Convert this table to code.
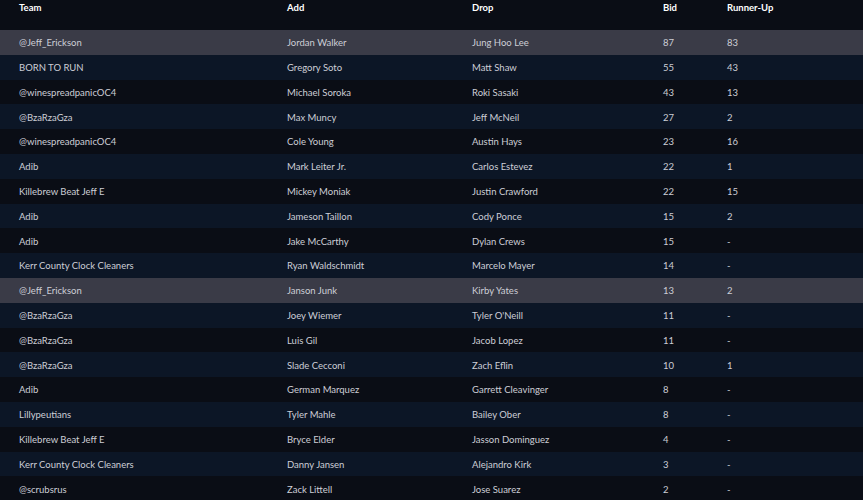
import * as React from 'react';

type Claim = {
  team: string;
  add: string;
  drop: string;
  bid: number;
  runnerUp: string;
};

const claims: Claim[] = [
  { team: '@Jeff_Erickson', add: 'Jordan Walker', drop: 'Jung Hoo Lee', bid: 87, runnerUp: '83' },
  { team: 'BORN TO RUN', add: 'Gregory Soto', drop: 'Matt Shaw', bid: 55, runnerUp: '43' },
  { team: '@winespreadpanicOC4', add: 'Michael Soroka', drop: 'Roki Sasaki', bid: 43, runnerUp: '13' },
  { team: '@BzaRzaGza', add: 'Max Muncy', drop: 'Jeff McNeil', bid: 27, runnerUp: '2' },
  { team: '@winespreadpanicOC4', add: 'Cole Young', drop: 'Austin Hays', bid: 23, runnerUp: '16' },
  { team: 'Adib', add: 'Mark Leiter Jr.', drop: 'Carlos Estevez', bid: 22, runnerUp: '1' },
  { team: 'Killebrew Beat Jeff E', add: 'Mickey Moniak', drop: 'Justin Crawford', bid: 22, runnerUp: '15' },
  { team: 'Adib', add: 'Jameson Taillon', drop: 'Cody Ponce', bid: 15, runnerUp: '2' },
  { team: 'Adib', add: 'Jake McCarthy', drop: 'Dylan Crews', bid: 15, runnerUp: '-' },
  { team: 'Kerr County Clock Cleaners', add: 'Ryan Waldschmidt', drop: 'Marcelo Mayer', bid: 14, runnerUp: '-' },
  { team: '@Jeff_Erickson', add: 'Janson Junk', drop: 'Kirby Yates', bid: 13, runnerUp: '2' },
  { team: '@BzaRzaGza', add: 'Joey Wiemer', drop: "Tyler O'Neill", bid: 11, runnerUp: '-' },
  { team: '@BzaRzaGza', add: 'Luis Gil', drop: 'Jacob Lopez', bid: 11, runnerUp: '-' },
  { team: '@BzaRzaGza', add: 'Slade Cecconi', drop: 'Zach Eflin', bid: 10, runnerUp: '1' },
  { team: 'Adib', add: 'German Marquez', drop: 'Garrett Cleavinger', bid: 8, runnerUp: '-' },
  { team: 'Lillypeutians', add: 'Tyler Mahle', drop: 'Bailey Ober', bid: 8, runnerUp: '-' },
  { team: 'Killebrew Beat Jeff E', add: 'Bryce Elder', drop: 'Jasson Dominguez', bid: 4, runnerUp: '-' },
  { team: 'Kerr County Clock Cleaners', add: 'Danny Jansen', drop: 'Alejandro Kirk', bid: 3, runnerUp: '-' },
  { team: '@scrubsrus', add: 'Zack Littell', drop: 'Jose Suarez', bid: 2, runnerUp: '-' },
];

const cols = 'grid grid-cols-[268px_185px_191px_64px_1fr] pl-[19px]';

export default function App() {
  const rowBg = (claim: Claim, i: number) => {
    if (claim.team === '@Jeff_Erickson') return 'bg-[#3a3b47]';
    return i % 2 === 1 ? 'bg-[#0c1626]' : 'bg-[#0a0d15]';
  };

  return (
    <div className="h-[500px] w-[863px] overflow-hidden bg-[#0a0d15] font-['Lato',sans-serif] text-[9.5px]">
      <div className={`${cols} h-[30px] pt-[1px] font-bold text-white`}>
        <div>Team</div>
        <div>Add</div>
        <div>Drop</div>
        <div>Bid</div>
        <div>Runner-Up</div>
      </div>

      {claims.map((claim, i) => (
        <div key={i} className={`${cols} h-[24.8px] items-center pt-[2px] text-[#cdced6] ${rowBg(claim, i)}`}>
          <div>{claim.team}</div>
          <div>{claim.add}</div>
          <div>{claim.drop}</div>
          <div>{claim.bid}</div>
          <div>{claim.runnerUp}</div>
        </div>
      ))}
    </div>
  );
}
